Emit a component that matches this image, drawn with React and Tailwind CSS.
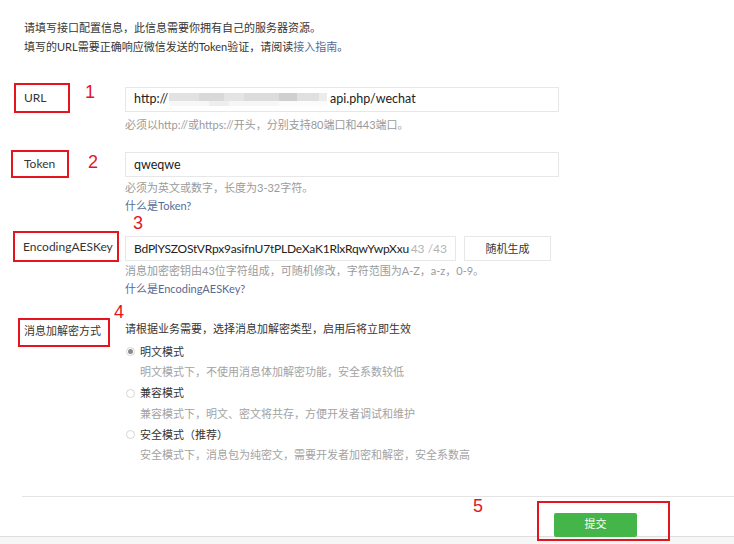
import React from 'react';

const red = 'border-2 border-[#e5141f]';

function Num({ n, className }) {
  return (
    <span className={'absolute text-[18px] leading-[18px] text-[#e5141f] font-["Liberation_Sans",sans-serif] ' + className}>{n}</span>
  );
}

function Radio({ checked, label, desc }) {
  return (
    <div>
      <div className="flex items-center h-[21px] ml-[1px]">
        <span className="w-[9px] h-[9px] rounded-full border border-[#d6d6d6] flex items-center justify-center mr-[5px]">
          {checked && <span className="w-[5px] h-[5px] rounded-full bg-[#8a8a8a]" />}
        </span>
        <span className="text-[#353535]">{label}</span>
      </div>
      <div className="ml-[15px] h-[20.5px] leading-[20px] text-[#a3a3a3]">{desc}</div>
    </div>
  );
}

export default function App(){
  return (
    <div className='w-[734px] h-[544px] overflow-hidden bg-white text-[11px] font-["Lato","Noto_Sans_CJK_SC",sans-serif] text-[#353535]'>
      <div className="pt-[18px] pl-[24px] leading-[19px]">
        <p>请填写接口配置信息，此信息需要你拥有自己的服务器资源。</p>
        <p>填写的URL需要正确响应微信发送的Token验证，请阅读<span className="text-[#576b95]">接入指南</span>。</p>
      </div>

      {/* URL */}
      <div className="relative flex mt-[27px]">
        <div className="w-[125px] shrink-0">
          <div className={'ml-[14px] w-[56px] h-[30px] pl-[8px] flex items-center text-[12px] ' + red}>URL</div>
        </div>
        <div>
          <div className="mt-[4px] w-[434px] h-[25px] border border-[#e7e7e7] flex items-center px-[8px] text-[12.5px] text-[#222]">
            <span>http://</span>
            <span className="flex flex-col ml-[1px]">
              <span className="flex h-[8px]">
                <span className="w-[30px] bg-[#e2e2e2]" />
                <span className="w-[25px] bg-[#d9d9d9]" />
                <span className="w-[20px] bg-[#e4e4e4]" />
                <span className="w-[35px] bg-[#dcdcdc]" />
                <span className="w-[18px] bg-[#cfcfcf]" />
                <span className="w-[22px] bg-[#e0e0e0]" />
                <span className="w-[8px] bg-[#ececec]" />
              </span>
              <span className="flex h-[5px]">
                <span className="w-[40px] bg-[#f7f7f7]" />
                <span className="w-[20px] bg-[#eeeeee]" />
                <span className="w-[50px] bg-[#f6f6f6]" />
                <span className="w-[48px] bg-[#fbfbfb]" />
              </span>
            </span>
            <span className="ml-[3px]">api.php/wechat</span>
          </div>
          <p className="mt-[4px] leading-[18px] text-[#9a9a9a]">必须以http://或https://开头，分别支持80端口和443端口。</p>
        </div>
        <Num n="1" className="left-[85px] top-0" />
      </div>

      {/* Token */}
      <div className="relative flex mt-[16px]">
        <div className="w-[125px] shrink-0">
          <div className={'ml-[11px] w-[58px] h-[28px] pl-[11px] flex items-center text-[12px] ' + red}>Token</div>
        </div>
        <div className="leading-[18px]">
          <div className="mt-[2px] w-[434px] h-[25px] border border-[#e7e7e7] flex items-center px-[8px] text-[12.5px] text-[#222]">qweqwe</div>
          <p className="mt-[2px] text-[#9a9a9a]">必须为英文或数字，长度为3-32字符。</p>
          <p className="text-[#576b95]">什么是Token?</p>
        </div>
        <Num n="2" className="left-[88px] top-[3px]" />
      </div>

      {/* EncodingAESKey */}
      <div className="relative flex mt-[16px]">
        <div className="w-[125px] shrink-0">
          <div className={'ml-[13px] w-[106px] h-[31px] pl-[8px] flex items-center text-[12px] ' + red}>EncodingAESKey</div>
        </div>
        <div className="leading-[18px]">
          <div className="flex mt-[5px]">
            <div className="w-[331px] h-[25px] border border-[#e7e7e7] flex items-center px-[8px] text-[12px] text-[#222] whitespace-nowrap">
              <span className="flex-1 tracking-[-0.2px]">BdPlYSZOStVRpx9asifnU7tPLDeXaK1RlxRqwYwpXxu</span>
              <span className="text-[#b5b5b5]">43 /43</span>
            </div>
            <button className="ml-[8px] w-[87px] h-[25px] border border-[#e7e7e7] bg-white text-[#353535]">随机生成</button>
          </div>
          <p className="mt-[1px] text-[#9a9a9a]">消息加密密钥由43位字符组成，可随机修改，字符范围为A-Z，a-z，0-9。</p>
          <p className="text-[#576b95]">什么是EncodingAESKey?</p>
        </div>
        <Num n="3" className="left-[133px] top-[-17px]" />
      </div>

      {/* 消息加解密方式 */}
      <div className="relative flex mt-[20px]">
        <div className="w-[125px] shrink-0">
          <div className={'ml-[18px] w-[92px] h-[29px] pl-[4px] pt-[2px] leading-[18px] ' + red}>消息加解密方式</div>
        </div>
        <div className="leading-[18px]">
          <p className="mt-[2px]">请根据业务需要，选择消息加解密类型，启用后将立即生效</p>
          <div className="mt-[3px]">
            <Radio checked label="明文模式" desc="明文模式下，不使用消息体加解密功能，安全系数较低" />
            <Radio label="兼容模式" desc="兼容模式下，明文、密文将共存，方便开发者调试和维护" />
            <Radio label="安全模式（推荐）" desc="安全模式下，消息包为纯密文，需要开发者加密和解密，安全系数高" />
          </div>
        </div>
        <Num n="4" className="left-[114px] top-[-15px]" />
      </div>

      {/* footer */}
      <div className="relative mt-[30px] border-b border-[#dedede]">
        <div className="ml-[22px] border-t border-[#e4e4e4] h-[40px]">
          <button className="ml-[532px] mt-[16px] w-[83px] h-[24px] rounded-[2px] bg-[#44b549] text-white">提交</button>
        </div>
        <Num n="5" className="left-[473px] top-[1px]" />
        <div className={'absolute left-[537px] top-[5px] w-[133px] h-[40px] ' + red} />
      </div>
      <div className="h-[8px] bg-[#f6f6f6]" />
    </div>
  );
}
